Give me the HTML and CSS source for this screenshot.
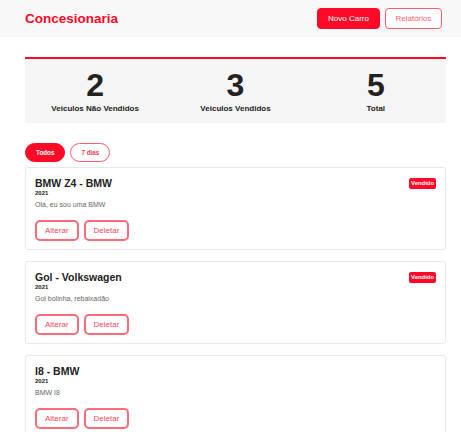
FILE: index.html
```html
<!DOCTYPE html>
<html lang="pt">
<head>
<meta charset="utf-8">
<title>Concesionaria</title>
<link rel="stylesheet" href="styles.css">
</head>
<body>
<header class="topbar">
  <h1 class="brand">Concesionaria</h1>
  <nav class="actions">
    <button class="btn btn-solid">Novo Carro</button>
    <button class="btn btn-outline-thin">Relatórios</button>
  </nav>
</header>
<main class="content">
  <section class="stats">
    <div class="stat"><div class="stat-num">2</div><div class="stat-label">Veiculos Não Vendidos</div></div>
    <div class="stat"><div class="stat-num">3</div><div class="stat-label">Veiculos Vendidos</div></div>
    <div class="stat"><div class="stat-num">5</div><div class="stat-label">Total</div></div>
  </section>
  <div class="filters">
    <button class="pill pill-active">Todos</button>
    <button class="pill">7 dias</button>
  </div>
  <div class="cards">
    <article class="card">
      <div class="card-head">
        <h2 class="card-title">BMW Z4 - BMW</h2>
        <span class="badge">Vendido</span>
      </div>
      <div class="card-year">2021</div>
      <p class="card-desc">Olá, eu sou uma BMW</p>
      <div class="card-actions">
        <button class="obtn">Alterar</button>
        <button class="obtn">Deletar</button>
      </div>
    </article>
    <article class="card">
      <div class="card-head">
        <h2 class="card-title">Gol - Volkswagen</h2>
        <span class="badge">Vendido</span>
      </div>
      <div class="card-year">2021</div>
      <p class="card-desc">Gol bolinha, rebaixadão</p>
      <div class="card-actions">
        <button class="obtn">Alterar</button>
        <button class="obtn">Deletar</button>
      </div>
    </article>
    <article class="card">
      <div class="card-head">
        <h2 class="card-title">I8 - BMW</h2>
      </div>
      <div class="card-year">2021</div>
      <p class="card-desc">BMW I8</p>
      <div class="card-actions">
        <button class="obtn">Alterar</button>
        <button class="obtn">Deletar</button>
      </div>
    </article>
  </div>
</main>
</body>
</html>
```

FILE: styles.css
```css
* { box-sizing: border-box; }
html, body { margin: 0; padding: 0; background: #fff; }
body {
  font-family: "Liberation Sans", Arial, sans-serif;
  color: #222;
  overflow: hidden;
}
button { font-family: inherit; cursor: pointer; margin: 0; }

.topbar {
  height: 37px;
  background: #f8f8f8;
  display: flex;
  align-items: center;
  justify-content: space-between;
  padding: 0 19px 0 25px;
}
.brand {
  margin: 0;
  font-size: 13.5px;
  font-weight: bold;
  color: #fe0a28;
  line-height: 16px;
}
.actions { display: flex; gap: 5px; }
.btn {
  height: 21px;
  font-size: 8px;
  line-height: 19px;
  border-radius: 4px;
  padding: 0 10px;
}
.btn-solid {
  background: #fe0a28;
  border: 1px solid #fe0a28;
  color: #fff;
}
.btn-outline-thin {
  background: #fff;
  border: 1px solid #ff5c6c;
  color: #ff5c6c;
  padding: 0 9.5px;
}

.content { margin: 20px 15px 0 25px; }

.stats {
  border-top: 2px solid #fe0a28;
  background: #f5f5f5;
  display: grid;
  grid-template-columns: 1fr 1fr 1fr;
  padding: 8px 0 9px;
  text-align: center;
}
.stat-num {
  font-size: 32px;
  line-height: 36px;
  font-weight: bold;
  color: #222;
}
.stat-label {
  font-size: 8px;
  line-height: 11px;
  font-weight: bold;
  color: #222;
}

.filters {
  display: flex;
  gap: 5px;
  margin-top: 20px;
}
.pill {
  height: 19px;
  font-size: 6.3px;
  line-height: 15px;
  font-weight: bold;
  border-radius: 10px;
  padding: 0 10px;
  background: #fff;
  border: 1.5px solid #ff5c6c;
  color: #f43a50;
  min-width: 40px;
}
.pill-active {
  background: #fe0a28;
  border-color: #fe0a28;
  color: #fff;
}

.cards {
  display: flex;
  flex-direction: column;
  gap: 11px;
  margin-top: 5px;
}
.card {
  border: 1px solid #e9e9e9;
  border-radius: 3px;
  padding: 9px 9px 8px;
  background: #fff;
  box-shadow: 0 0 2px rgba(0,0,0,0.04);
}
.card-head {
  display: flex;
  justify-content: space-between;
  align-items: flex-start;
}
.card-title {
  margin: 0;
  font-size: 10.5px;
  line-height: 13px;
  font-weight: bold;
  color: #222;
}
.badge {
  margin-top: 1px;
  background: #fe0a28;
  color: #fff;
  font-size: 5.9px;
  font-weight: bold;
  line-height: 9px;
  padding: 1px 2px;
  border-radius: 2px;
}
.card-year {
  font-size: 6px;
  line-height: 7px;
  font-weight: bold;
  color: #222;
}
.card-desc {
  margin: 3px 0 0;
  font-size: 7px;
  line-height: 9px;
  color: #666;
}
.card-actions {
  display: flex;
  gap: 5px;
  margin-top: 11px;
}
.obtn {
  height: 21px;
  font-size: 8px;
  line-height: 17px;
  padding: 0 8px;
  background: #fff;
  border: 2px solid #ff6a79;
  border-radius: 5px;
  color: #f5475b;
}
```
